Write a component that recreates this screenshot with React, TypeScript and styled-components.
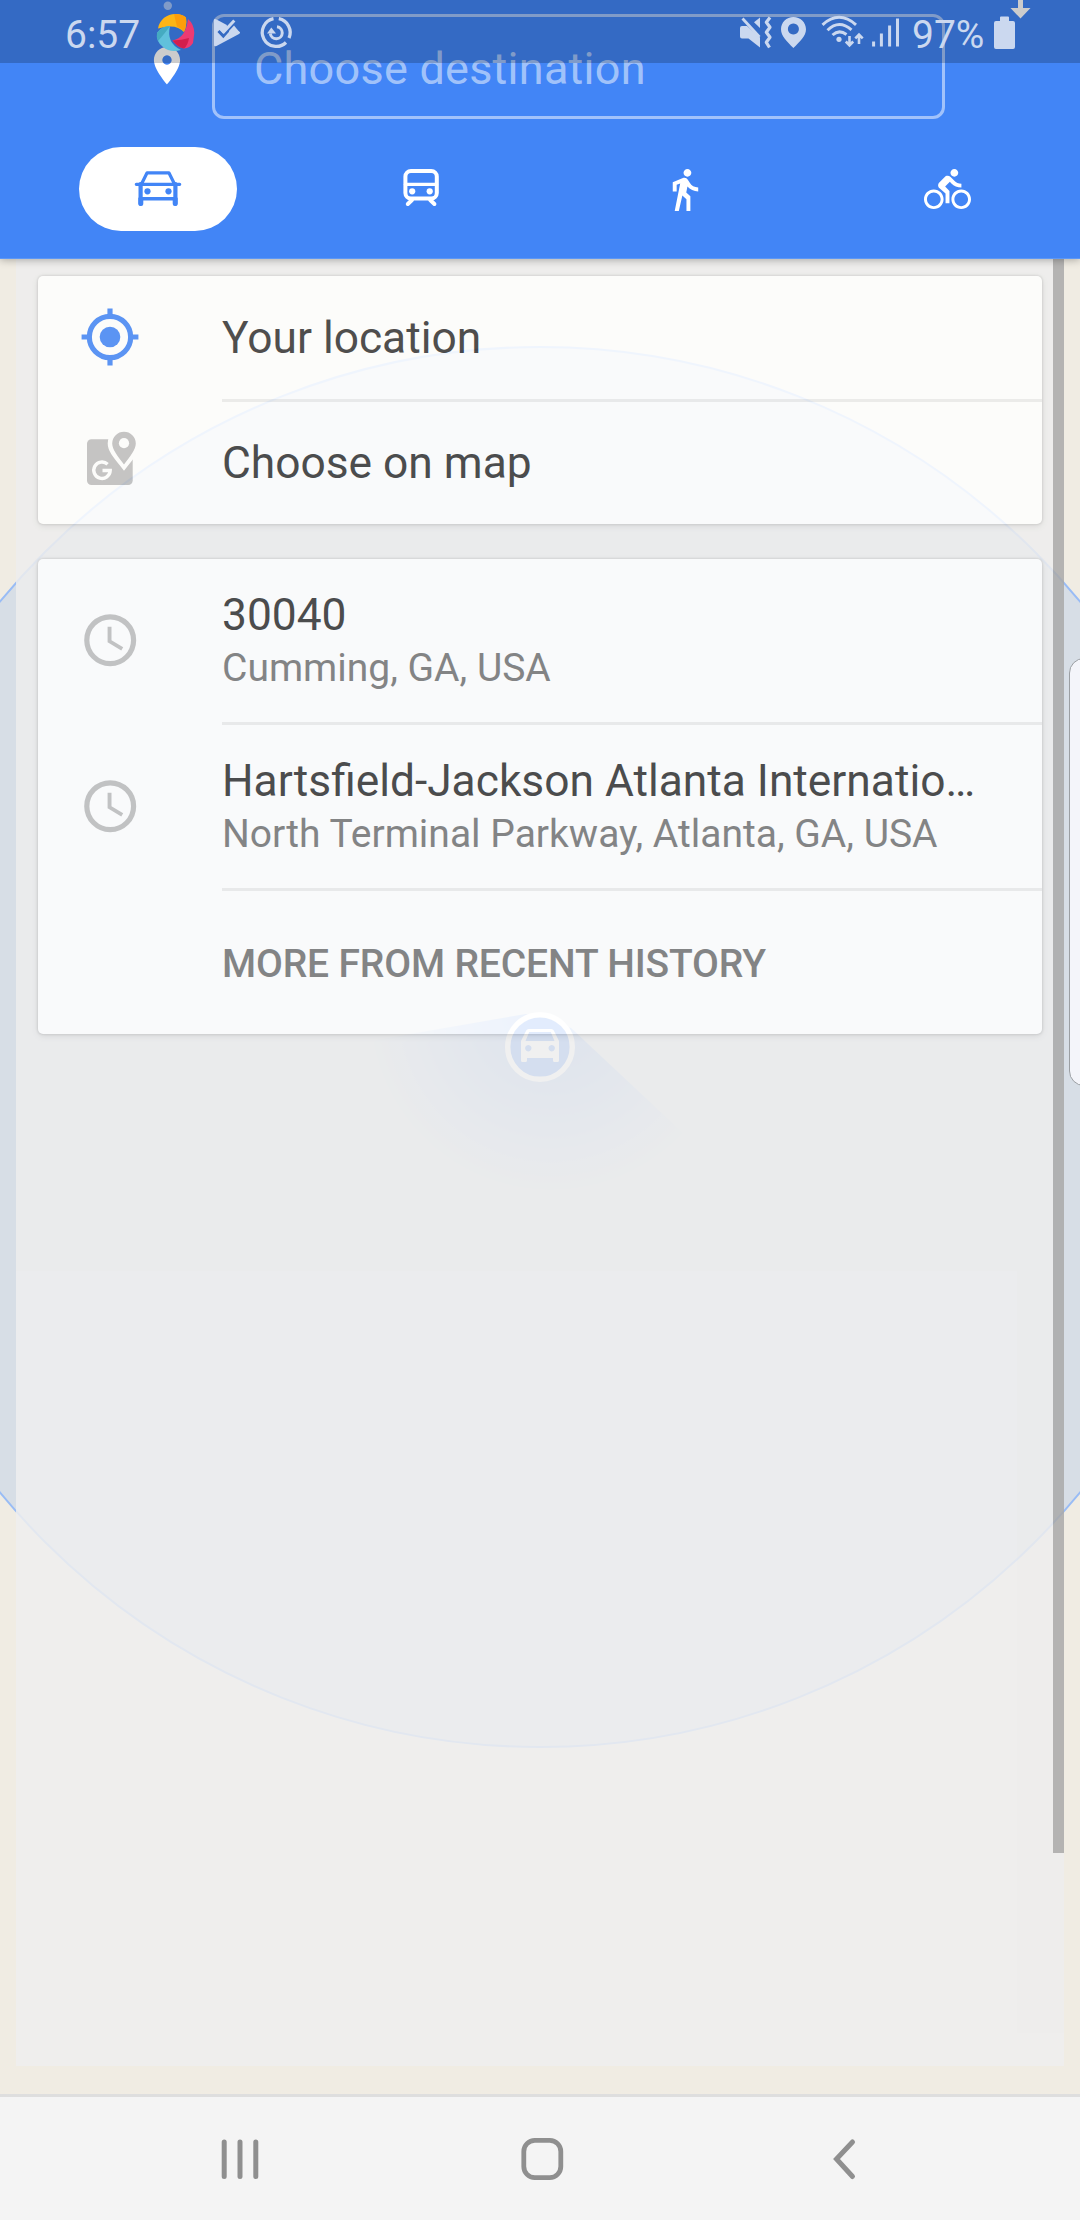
import React from "react";
import styled, { createGlobalStyle } from "styled-components";

const BLUE = "#4285f6";
const PALE = "#cbd8ef";

const GlobalStyle = createGlobalStyle`
  * { box-sizing: border-box; }
  html, body { margin: 0; padding: 0; }
  body {
    width: 1080px;
    height: 2220px;
    overflow: hidden;
    font-family: Roboto, "Noto Sans", sans-serif;
  }
`;

const Screen = styled.div`
  position: relative;
  isolation: isolate;
  display: flex;
  flex-direction: column;
  width: 1080px;
  height: 2220px;
  overflow: hidden;
  background: #f0ece3;
`;

const MapCanvas = styled.svg`
  position: absolute;
  inset: 0;
  z-index: -1;
`;

const Header = styled.header`
  position: relative;
  z-index: 2;
  display: flex;
  flex-direction: column;
  flex: none;
  height: 259px;
  background: ${BLUE};
  border-bottom: 1px solid #5c97f6;
  box-shadow: 0 1px 8px rgba(0, 0, 0, 0.3);
`;

const DestinationRow = styled.div`
  display: flex;
  height: 119px;
  padding-left: 148px;
`;

const DestinationField = styled.div`
  width: 733px;
  height: 105px;
  margin: 14px 0 0 24px;
  padding-left: 39px;
  border: 3px solid rgba(255, 255, 255, 0.5);
  border-radius: 12px;
  color: rgba(255, 255, 255, 0.52);
  font-size: 45px;
  letter-spacing: 0.25px;
  line-height: 103px;
  white-space: nowrap;
`;

const SwapArrow = styled.svg`
  margin-left: 65px;
`;

const Modes = styled.nav`
  display: grid;
  grid-template-columns: repeat(4, 1fr);
  justify-items: center;
  padding: 28px 1px 0 26px;
`;

const ModeButton = styled.button<{ $active?: boolean }>`
  display: flex;
  align-items: center;
  justify-content: center;
  width: 158px;
  height: 84px;
  padding: 0;
  border: 0;
  border-radius: 42px;
  background: ${(p) => (p.$active ? "#fff" : "transparent")};
  color: ${(p) => (p.$active ? BLUE : "#fff")};
`;

const StatusBar = styled.div`
  position: absolute;
  top: 0;
  left: 0;
  z-index: 3;
  display: flex;
  justify-content: space-between;
  width: 1080px;
  height: 63px;
  padding: 0 65px 0 65px;
  background: rgba(0, 0, 0, 0.2);
`;

const StatusGroup = styled.div`
  display: flex;
`;

const StatusText = styled.span<{ $width: number }>`
  width: ${(p) => p.$width}px;
  color: ${PALE};
  font-size: 39px;
  line-height: 70px;
  white-space: nowrap;
`;

const Panel = styled.main`
  display: flex;
  flex: none;
  width: 1048px;
  height: 1807px;
  margin-left: 16px;
  background: #eeeeee;
  opacity: 0.85;
`;

const Cards = styled.div`
  display: flex;
  flex-direction: column;
  gap: 35px;
  width: 1037px;
  padding: 17px 11px 0 22px;
`;

const Scrollbar = styled.div`
  width: 11px;
  height: 1594px;
  background: #aaaaaa;
`;

const Card = styled.section`
  display: flex;
  flex-direction: column;
  border-radius: 5px;
  background: #fff;
  box-shadow: 0 0 2px 1px rgba(0, 0, 0, 0.09), 0 2px 7px rgba(0, 0, 0, 0.1);
`;

const Row = styled.div<{ $height: number }>`
  display: flex;
  height: ${(p) => p.$height}px;
`;

const RowIcon = styled.div<{ $lift?: number }>`
  display: flex;
  align-items: center;
  justify-content: center;
  width: 144px;
  margin-right: 40px;
  padding-bottom: ${(p) => p.$lift ?? 0}px;
`;

const RowBody = styled.div<{ $divided?: boolean; $drop?: number }>`
  display: flex;
  flex: 1;
  flex-direction: column;
  justify-content: center;
  min-width: 0;
  padding-top: ${(p) => p.$drop ?? 0}px;
  border-bottom: ${(p) => (p.$divided ? "3px solid #ebebeb" : "0")};
`;

const Title = styled.div`
  color: #333333;
  font-size: 44.3px;
  line-height: 54px;
  white-space: nowrap;
`;

const Subtitle = styled.div`
  color: #757575;
  font-size: 39px;
  line-height: 53px;
  white-space: nowrap;
`;

const MoreLink = styled.div`
  color: #757575;
  font-size: 39px;
  font-weight: 500;
  letter-spacing: -0.15px;
  line-height: 53px;
  white-space: nowrap;
`;

const EdgeHandle = styled.div`
  position: absolute;
  top: 658px;
  left: 1069px;
  width: 30px;
  height: 428px;
  border: 1px solid #9b9fa3;
  border-radius: 15px;
  background: #f4f5fa;
`;

const NavBar = styled.footer`
  display: grid;
  grid-template-columns: repeat(3, 302px);
  place-items: center;
  height: 126px;
  margin-top: auto;
  padding: 0 85px 0 89px;
  border-top: 3px solid #dedede;
  background: #f4f4f4;
`;

type Slice = { x: number; w: number; children: React.ReactNode };

/* A full-height slice of the status bar, drawn in screen coordinates. */
const StatusIcon = ({ x, w, children }: Slice) => (
  <svg width={w} height={63} viewBox={`${x} 0 ${w} 63`} fill="none" stroke="none">
    {children}
  </svg>
);

const CarIcon = () => (
  <svg width="50" height="40" viewBox="132.5 169 50 40" fill="none" stroke="currentColor" strokeWidth="3.6" strokeLinecap="round" strokeLinejoin="round">
    <path d="M141 184 146.6 172.8H168.4L174 184M135.8 184.3H179.2" strokeWidth="3.2" />
    <path d="M140.1 184V203.8M174.9 184V203.8" strokeWidth="4.2" />
    <path d="M140 198.7H175" />
    <path d="M140.3 203.6V199M174.7 203.6V199" strokeWidth="5" />
    <circle cx="147" cy="191.3" r="3.1" fill="currentColor" stroke="none" />
    <circle cx="168" cy="191.3" r="3.1" fill="currentColor" stroke="none" />
  </svg>
);

const BusIcon = () => (
  <svg width="40" height="42" viewBox="400.5 168 40 42" fill="none" stroke="currentColor" strokeWidth="4" strokeLinecap="round">
    <rect x="404.9" y="171" width="31.4" height="27.5" rx="5.5" />
    <path d="M405 184.3H436" strokeWidth="3.2" />
    <path d="M411.5 200 407.3 204M429.7 200 433.9 204" />
    <circle cx="411.7" cy="191.3" r="3.1" fill="currentColor" stroke="none" />
    <circle cx="429.2" cy="191.3" r="3.1" fill="currentColor" stroke="none" />
  </svg>
);

const WalkIcon = () => (
  <svg width="47" height="47" viewBox="0 0 24 24" fill="currentColor">
    <path d="M13.5 5.5c1.1 0 2-.9 2-2s-.9-2-2-2-2 .9-2 2 .9 2 2 2zM9.8 8.9L7 23h2.1l1.8-8 2.1 2v6h2v-7.5l-2.1-2 .6-3C14.8 12 16.8 13 19 13v-2c-1.9 0-3.5-1-4.3-2.4l-1-1.6c-.4-.6-1-1-1.7-1-.3 0-.5.1-.8.1L6 8.3V13h2V9.6l1.8-.7" />
  </svg>
);

const BikeIcon = () => (
  <svg width="47" height="47" viewBox="0 0 24 24" fill="currentColor">
    <path d="M15.5 5.5c1.1 0 2-.9 2-2s-.9-2-2-2-2 .9-2 2 .9 2 2 2zM5 12c-2.8 0-5 2.2-5 5s2.2 5 5 5 5-2.2 5-5-2.2-5-5-5zm0 8.500c-1.900 0-3.500-1.600-3.500-3.500s1.600-3.500 3.500-3.500 3.500 1.600 3.500 3.500-1.600 3.500-3.500 3.500zm5.800-10l2.400-2.400.8.8c1.300 1.300 3 2.100 5.100 2.100V9c-1.500 0-2.700-.6-3.600-1.500l-1.900-1.900c-.5-.4-1-.6-1.600-.6s-1.100.2-1.400.6L7.800 8.400c-.4.4-.6.9-.6 1.400 0 .6.2 1.100.6 1.400L11 14v5h2v-6.200l-2.200-2.300zM19 12c-2.800 0-5 2.200-5 5s2.200 5 5 5 5-2.200 5-5-2.200-5-5-5zm0 8.500c-1.900 0-3.500-1.600-3.500-3.500s1.600-3.500 3.500-3.500 3.500 1.600 3.500 3.500-1.600 3.500-3.500 3.500z" />
  </svg>
);

const TargetIcon = () => (
  <svg width="62" height="62" viewBox="0 0 24 24" fill="none" stroke={BLUE} strokeWidth="2">
    <circle cx="12" cy="12" r="8" />
    <path d="M12 1v3M12 20v3M1 12h3M20 12h3" />
    <circle cx="12" cy="12" r="4" fill={BLUE} stroke="none" />
  </svg>
);

const MapPickIcon = () => (
  <svg width="56" height="60" viewBox="82 430 56 60" fill="none">
    <rect x="87" y="439.3" width="45.7" height="45.7" rx="4.5" fill="#bebebe" />
    <path d="M124 463.5C118 456 112.2 449.5 112.2 443.5a11.8 11.8 0 0 1 23.6 0C135.8 449.500 130 456 124 463.500Z" fill="#bebebe" stroke="#fff" strokeWidth="9" strokeLinejoin="miter" />
    <path d="M124 464.500C118 456.500 112.200 449.500 112.200 443.500a11.800 11.800 0 0 1 23.600 0C135.800 449.500 130 456.500 124 464.500Z" fill="#bebebe" />
    <circle cx="124" cy="443.2" r="5.1" fill="#fff" />
    <path d="M107.6 464.2A8.2 8.2 0 1 0 110.2 470.5H102.5" stroke="#fff" strokeWidth="3.4" />
  </svg>
);

const ClockIcon = () => (
  <svg width="62.4" height="62.4" viewBox="0 0 24 24" fill="none">
    <circle cx="12" cy="12" r="9" stroke="#bebebe" strokeWidth="2" />
    <path d="M12.5 6.8H11v6l5.25 3.15.75-1.23-4.5-2.67z" fill="#bebebe" />
  </svg>
);

const MapScene = () => (
  <MapCanvas width="1080" height="2220" viewBox="0 0 1080 2220">
    <defs>
      <radialGradient id="beam" gradientUnits="userSpaceOnUse" cx="551" cy="1009.5" r="182">
        <stop offset="0" stopColor={BLUE} stopOpacity="0.6" />
        <stop offset="0.45" stopColor={BLUE} stopOpacity="0.36" />
        <stop offset="0.8" stopColor={BLUE} stopOpacity="0.14" />
        <stop offset="1" stopColor={BLUE} stopOpacity="0.02" />
      </radialGradient>
    </defs>
    <circle cx="540" cy="1047" r="700" fill="#d7dee6" stroke="#99bcf5" strokeWidth="2" />
    <path d="M526 1014 373 1040.500A181 181 0 0 0 683 1133L571 1028Z" fill="url(#beam)" />
    <circle cx="540" cy="1047" r="32.3" fill={BLUE} stroke="#fff" strokeWidth="5.4" />
    <path
      fill="#fff"
      fillRule="evenodd"
      d="M521 1041 526.2 1030.5Q527 1029 528.7 1029H551.3Q553 1029 553.8 1030.5L559 1041V1060.5Q559 1062 557.5 1062H554.5Q553 1062 553 1060.5V1058H527V1060.5Q527 1062 525.5 1062H522.5Q521 1062 521 1060.5ZM525.5 1041H554.5L550.8 1032H529.2ZM528.3 1045a3.2 3.2 0 1 0 .01 0ZM551.7 1045a3.2 3.2 0 1 0 .01 0Z"
    />
  </MapCanvas>
);

const TIME_ICONS = (
  <>
    <StatusIcon x={144} w={60}>
      <path d="M158 28.5C159.5 19 168 13.5 176 14Q182 14 186 17.5Q187 26 184 32Q176 23 158 28.5Z" fill="#fdb515" />
      <path d="M174 14Q182 13.5 186 17.5Q187 26 184 32Q181 28 177 26.5Z" fill="#fd9d0a" />
      <path d="M188 19Q194 24 194.3 33L193 43Q190 48 184 48.5Q177 47 172.5 40.5Q186 38 188 19Z" fill="#ee3a72" />
      <path d="M172.5 40.5Q182 40 189 38Q188 45 184 48.5Q177 47 172.5 40.5Z" fill="#d31f4c" />
      <path d="M157 33Q162 26 170 26Q166 43 181 50Q170 53 163 47Q156 42 157 33Z" fill="#60c1dc" />
      <path d="M157 33Q162 26 170 26Q166 32 158 41Q156 37 157 33Z" fill="#45abc1" />
    </StatusIcon>
    <StatusIcon x={204} w={50}>
      <path d="M214 20Q214 18.5 216 19.3L239 31.5Q241 32.7 239 34L216.5 46Q214 47 214 45Z" fill={PALE} />
      <path d="M226.500 26 232 20.500 238.500 27 233 29Z" fill="#356ac3" />
      <path d="M218.5 31 223.3 36 233 25" stroke="#356ac3" strokeWidth="3" />
      <path d="M219.8 27.5 223.8 31.8 234.3 20.5" stroke={PALE} strokeWidth="3" />
      <path d="M229 31 234 25.500 240 32.700 230 38Z" fill={PALE} />
    </StatusIcon>
    <StatusIcon x={254} w={50}>
      <g stroke={PALE} strokeWidth="3.3">
        <path d="M273.5 18.7A14 14 0 1 0 286 42.5" />
        <path d="M278.8 18.7A14 14 0 0 1 289 38" />
        <path d="M277 26.8A6 6 0 1 1 270.3 33.5" strokeWidth="3" />
      </g>
      <path d="M267 33.5 271.3 27.5 276 33.5Z" fill={PALE} />
    </StatusIcon>
  </>
);

const SYSTEM_ICONS = (
  <>
    <StatusIcon x={736} w={42}>
      <path d="M740 28Q740 26 742 26H747L760 37.5V47.5L748.5 38.5H742Q740 38.5 740 36.5Z" fill={PALE} />
      <path d="M742.5 18.5 759.5 37" stroke={PALE} strokeWidth="2.8" />
      <path d="M760 17.5V28L754 22.3Z" fill={PALE} />
      <path d="M770 17.5 766.3 22.3 770 27.3 766.3 32.3 770 37.3 766.3 42.3 769.5 47.5" stroke={PALE} strokeWidth="3.2" strokeLinejoin="round" />
    </StatusIcon>
    <StatusIcon x={778} w={40}>
      <path
        fill={PALE}
        fillRule="evenodd"
        d="M793.4 17C786.5 17 781 22.4 781 29.2C781 36 787 41.5 793.4 48C799.8 41.5 806 36 806 29.2C806 22.4 800.3 17 793.4 17ZM793.4 23.5a5.5 5.5 0 1 1-.01 0Z"
      />
    </StatusIcon>
    <StatusIcon x={818} w={50}>
      <g stroke={PALE} strokeWidth="3">
        <path d="M822.5 24.8Q839 9.8 856 24.8" />
        <path d="M827.5 30.2Q839 19 851.5 29.8" />
        <path d="M832.5 35Q839 29 846.5 34.5" />
        <path d="M849.5 36V45M845.8 41.5 849.5 45.3 853.2 41.5" strokeWidth="2.6" />
        <path d="M859 44V35M855.3 38.3 859 34.5 862.7 38.3" strokeWidth="2.6" />
      </g>
      <circle cx="839" cy="39.3" r="2.6" fill={PALE} />
    </StatusIcon>
    <StatusIcon x={868} w={44}>
      <path d="M873.6 41.5V46.5M881.4 33.5V46.5M889.6 25.5V46.5M897.5 18.5V46.5" stroke={PALE} strokeWidth="3" />
    </StatusIcon>
    <StatusText $width={76}>97%</StatusText>
    <StatusIcon x={988} w={27}>
      <path d="M1000 21V17.5Q1000 16.5 1001 16.5H1008Q1009 16.5 1009 17.5V21H1013Q1015 21 1015 23V47Q1015 49 1013 49H996Q994 49 994 47V23Q994 21 996 21Z" fill={PALE} />
    </StatusIcon>
  </>
);

export default function App() {
  return (
    <>
      <GlobalStyle />
      <Screen>
        <MapScene />
        <Header>
          <DestinationRow>
            <svg width="40" height="119" viewBox="148 0 40 119">
              <circle cx="167.8" cy="5.7" r="4.2" fill="#fff" opacity=".5" />
              <path
                transform="translate(144.56 43.2) scale(1.87)"
                fill="#fff"
                fillRule="evenodd"
                d="M12 2C8.13 2 5 5.13 5 9c0 5.25 7 13 7 13s7-7.75 7-13c0-3.87-3.13-7-7-7zM12 6.5a2.5 2.5 0 1 1-.01 0z"
              />
            </svg>
            <DestinationField>Choose destination</DestinationField>
            <SwapArrow width="22" height="20" viewBox="1010 0 22 20">
              <path d="M1018 0H1023V8H1030.5L1020.5 18.5 1010.5 8H1018Z" fill="#fff" />
            </SwapArrow>
          </DestinationRow>
          <Modes>
            <ModeButton $active aria-label="Drive"><CarIcon /></ModeButton>
            <ModeButton aria-label="Transit"><BusIcon /></ModeButton>
            <ModeButton aria-label="Walk"><WalkIcon /></ModeButton>
            <ModeButton aria-label="Bike"><BikeIcon /></ModeButton>
          </Modes>
        </Header>

        <Panel>
          <Cards>
            <Card>
              <Row $height={125.5}>
                <RowIcon $lift={3}><TargetIcon /></RowIcon>
                <RowBody $divided $drop={2}><Title>Your location</Title></RowBody>
              </Row>
              <Row $height={122.5}>
                <RowIcon $lift={5}><MapPickIcon /></RowIcon>
                <RowBody><Title>Choose on map</Title></RowBody>
              </Row>
            </Card>
            <Card>
              <Row $height={166}>
                <RowIcon $lift={4}><ClockIcon /></RowIcon>
                <RowBody $divided $drop={2}>
                  <Title>30040</Title>
                  <Subtitle>Cumming, GA, USA</Subtitle>
                </RowBody>
              </Row>
              <Row $height={166}>
                <RowIcon $lift={4}><ClockIcon /></RowIcon>
                <RowBody $divided $drop={2}>
                  <Title>Hartsfield-Jackson Atlanta Internatio…</Title>
                  <Subtitle>North Terminal Parkway, Atlanta, GA, USA</Subtitle>
                </RowBody>
              </Row>
              <Row $height={143}>
                <RowIcon />
                <RowBody $drop={4}><MoreLink>MORE FROM RECENT HISTORY</MoreLink></RowBody>
              </Row>
            </Card>
          </Cards>
          <Scrollbar />
        </Panel>

        <NavBar>
          <svg width="44" height="44" viewBox="0 0 44 44" stroke="#8f8f8f" strokeWidth="5" strokeLinecap="round">
            <path d="M6.2 5V39.5M22 5V39.5M37.8 5V39.5" />
          </svg>
          <svg width="44" height="44" viewBox="0 0 44 44" fill="none" stroke="#8f8f8f" strokeWidth="4.8">
            <rect x="3.8" y="3.4" width="37" height="37.2" rx="11" />
          </svg>
          <svg width="44" height="44" viewBox="0 0 44 44" fill="none" stroke="#8f8f8f" strokeWidth="5" strokeLinecap="round">
            <path d="M30.5 5 14.5 22 30.5 39.5" />
          </svg>
        </NavBar>

        <EdgeHandle />
        <StatusBar>
          <StatusGroup>
            <StatusText $width={79}>6:57</StatusText>
            {TIME_ICONS}
          </StatusGroup>
          <StatusGroup>{SYSTEM_ICONS}</StatusGroup>
        </StatusBar>
      </Screen>
    </>
  );
}
